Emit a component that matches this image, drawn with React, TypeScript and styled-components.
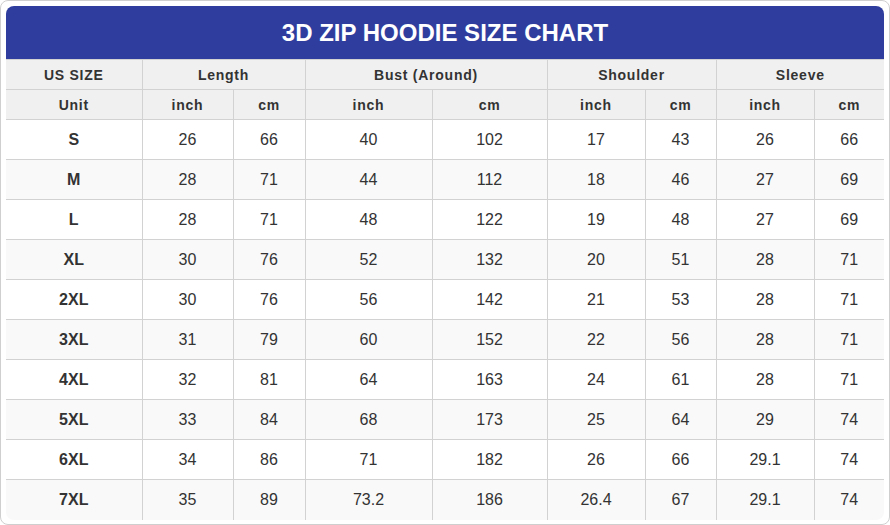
import React from "react";
import styled, { createGlobalStyle } from "styled-components";

const GlobalStyle = createGlobalStyle`
  html, body {
    margin: 0;
    padding: 0;
    background: #ffffff;
  }
  body {
    font-family: "Liberation Sans", Arial, sans-serif;
  }
`;

const rows = [
  ["S", "26", "66", "40", "102", "17", "43", "26", "66"],
  ["M", "28", "71", "44", "112", "18", "46", "27", "69"],
  ["L", "28", "71", "48", "122", "19", "48", "27", "69"],
  ["XL", "30", "76", "52", "132", "20", "51", "28", "71"],
  ["2XL", "30", "76", "56", "142", "21", "53", "28", "71"],
  ["3XL", "31", "79", "60", "152", "22", "56", "28", "71"],
  ["4XL", "32", "81", "64", "163", "24", "61", "28", "71"],
  ["5XL", "33", "84", "68", "173", "25", "64", "29", "74"],
  ["6XL", "34", "86", "71", "182", "26", "66", "29.1", "74"],
  ["7XL", "35", "89", "73.2", "186", "26.4", "67", "29.1", "74"],
];

const colWidths = [136, 91, 72, 127, 115, 98, 71, 98, 70];

const groups = [
  { label: "Length", span: 2 },
  { label: "Bust (Around)", span: 2 },
  { label: "Shoulder", span: 2 },
  { label: "Sleeve", span: 2 },
];

export default function App() {
  return (
    <>
      <GlobalStyle />
      <Frame>
        <Chart>
          <Title>3D ZIP HOODIE SIZE CHART</Title>
          <Table>
            <colgroup>
              {colWidths.map((w, i) => (
                <col key={i} style={{ width: w }} />
              ))}
            </colgroup>
            <thead>
              <tr>
                <HeadCell>US SIZE</HeadCell>
                {groups.map((g) => (
                  <HeadCell key={g.label} colSpan={g.span}>
                    {g.label}
                  </HeadCell>
                ))}
              </tr>
              <tr>
                <HeadCell>Unit</HeadCell>
                {groups.map((g) => (
                  <React.Fragment key={g.label}>
                    <HeadCell>inch</HeadCell>
                    <HeadCell>cm</HeadCell>
                  </React.Fragment>
                ))}
              </tr>
            </thead>
            <tbody>
              {rows.map((r, i) => (
                <Row key={r[0]} $striped={i % 2 === 1}>
                  {r.map((v, j) => (
                    <Cell key={j} $bold={j === 0}>
                      {v}
                    </Cell>
                  ))}
                </Row>
              ))}
            </tbody>
          </Table>
        </Chart>
      </Frame>
    </>
  );
}

const Frame = styled.div`
  box-sizing: border-box;
  width: 890px;
  height: 525px;
  border: 1px solid #cfcfcf;
  border-radius: 8px;
  padding: 5px;
  background: #ffffff;
`;

const Chart = styled.div`
  width: 878px;
  border-radius: 8px;
  overflow: hidden;
`;

const Title = styled.div`
  height: 53px;
  background: #2f3e9e;
  color: #ffffff;
  font-size: 24px;
  font-weight: bold;
  display: flex;
  align-items: center;
  justify-content: center;
`;

const Table = styled.table`
  width: 878px;
  table-layout: fixed;
  border-collapse: collapse;
  color: #333333;
`;

const HeadCell = styled.th`
  height: 30px;
  padding: 0;
  box-sizing: border-box;
  background: #f0f0f0;
  font-size: 14px;
  letter-spacing: 0.75px;
  font-weight: bold;
  text-align: center;
  border: 1px solid #d2d2d2;
  &:first-child {
    border-left: none;
  }
  &:last-child {
    border-right: none;
  }
`;

const Row = styled.tr<{ $striped: boolean }>`
  background: ${(p) => (p.$striped ? "#f9f9f9" : "#ffffff")};
  &:last-child td {
    border-bottom: none;
  }
`;

const Cell = styled.td<{ $bold: boolean }>`
  height: 40px;
  padding: 0;
  box-sizing: border-box;
  text-align: center;
  font-size: 16px;
  font-weight: ${(p) => (p.$bold ? "bold" : "normal")};
  border: 1px solid #d2d2d2;
  &:first-child {
    border-left: none;
  }
  &:last-child {
    border-right: none;
  }
`;
